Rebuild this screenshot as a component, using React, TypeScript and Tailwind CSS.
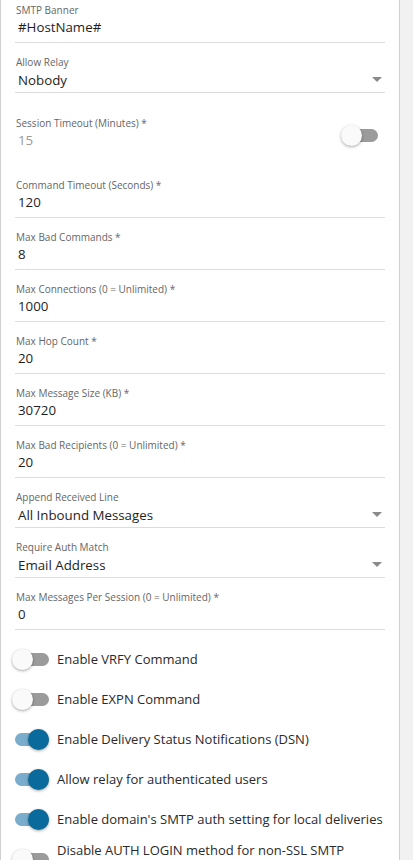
import React from "react";

type Field = { label: string; value: string; select?: boolean };

const topFields: Field[] = [
  { label: "SMTP Banner", value: "#HostName#" },
  { label: "Allow Relay", value: "Nobody", select: true },
];

const midFields: Field[] = [
  { label: "Command Timeout (Seconds) *", value: "120" },
  { label: "Max Bad Commands *", value: "8" },
  { label: "Max Connections (0 = Unlimited) *", value: "1000" },
  { label: "Max Hop Count *", value: "20" },
  { label: "Max Message Size (KB) *", value: "30720" },
  { label: "Max Bad Recipients (0 = Unlimited) *", value: "20" },
  { label: "Append Received Line", value: "All Inbound Messages", select: true },
  { label: "Require Auth Match", value: "Email Address", select: true },
  { label: "Max Messages Per Session (0 = Unlimited) *", value: "0" },
];

const toggles: { label: string; on: boolean }[] = [
  { label: "Enable VRFY Command", on: false },
  { label: "Enable EXPN Command", on: false },
  { label: "Enable Delivery Status Notifications (DSN)", on: true },
  { label: "Allow relay for authenticated users", on: true },
  { label: "Enable domain's SMTP auth setting for local deliveries", on: true },
  { label: "Disable AUTH LOGIN method for non-SSL SMTP connections", on: false },
];

const Switch = ({ on }: { on: boolean }) => (
  <div className="relative w-[34px] h-[21px] shrink-0">
    <div
      className={`absolute left-0 right-0 top-[4px] h-[13px] rounded-full ${
        on ? "bg-[#7aaccb]" : "bg-[#9b9b9b]"
      }`}
    />
    <div
      className={`absolute top-0 w-[21px] h-[21px] rounded-full shadow-[0_1px_3px_rgba(0,0,0,0.35)] ${
        on ? "right-0 bg-[#0a6a9b]" : "left-[-3px] bg-[#fafafa]"
      }`}
    />
  </div>
);

const Arrow = () => (
  <svg width="10" height="6" viewBox="0 0 10 6" className="mr-[3px]">
    <path d="M0 0 L10 0 L5 5 Z" fill="#8a8a8a" />
  </svg>
);

const FieldRow = ({ f }: { f: Field }) => (
  <div className="mb-[13px]">
    <div className="text-[10px] leading-[12px] text-[#666] pl-[1px]">{f.label}</div>
    <div
      className={`flex items-center justify-between border-b border-[#dcdcdc] ${
        f.select ? "mt-[2px] pb-[2px]" : "mt-[1px] pb-[5px]"
      }`}
    >
      <span className="text-[13.3px] leading-[20px] text-[#1e1e1e] pl-[3px]">{f.value}</span>
      {f.select && <Arrow />}
    </div>
  </div>
);

export default function App() {
  return (
    <div
      className="flex w-[413px] h-[860px] overflow-hidden bg-[#f1f1f1]"
      style={{ fontFamily: "'Open Sans', 'Noto Sans', sans-serif" }}
    >
      <div className="w-[400px] shrink-0 bg-white border-l border-r border-[#d0d0d0] pt-[4px] pl-[14px] pr-[14px]">
        {topFields.map((f) => (
          <FieldRow key={f.label} f={f} />
        ))}

        <div className="flex items-center justify-between pt-[11px] mb-[29px]">
          <div>
            <div className="text-[10px] leading-[12px] text-[#666] pl-[1px]">Session Timeout (Minutes) *</div>
            <div className="mt-[1px] text-[13.3px] leading-[20px] text-[#9a9a9a] pl-[3px]">15</div>
          </div>
          <div className="mr-[7px] mt-[4px]">
            <Switch on={false} />
          </div>
        </div>

        {midFields.map((f) => (
          <FieldRow key={f.label} f={f} />
        ))}

        <div className="flex flex-col mt-[-4px]">
          {toggles.map((t) => (
            <div key={t.label} className="flex items-center h-[40px] gap-[8px]">
              <Switch on={t.on} />
              <span className="text-[13px] leading-[18px] text-[#2a2a2a]">{t.label}</span>
            </div>
          ))}
        </div>
      </div>
    </div>
  );
}
